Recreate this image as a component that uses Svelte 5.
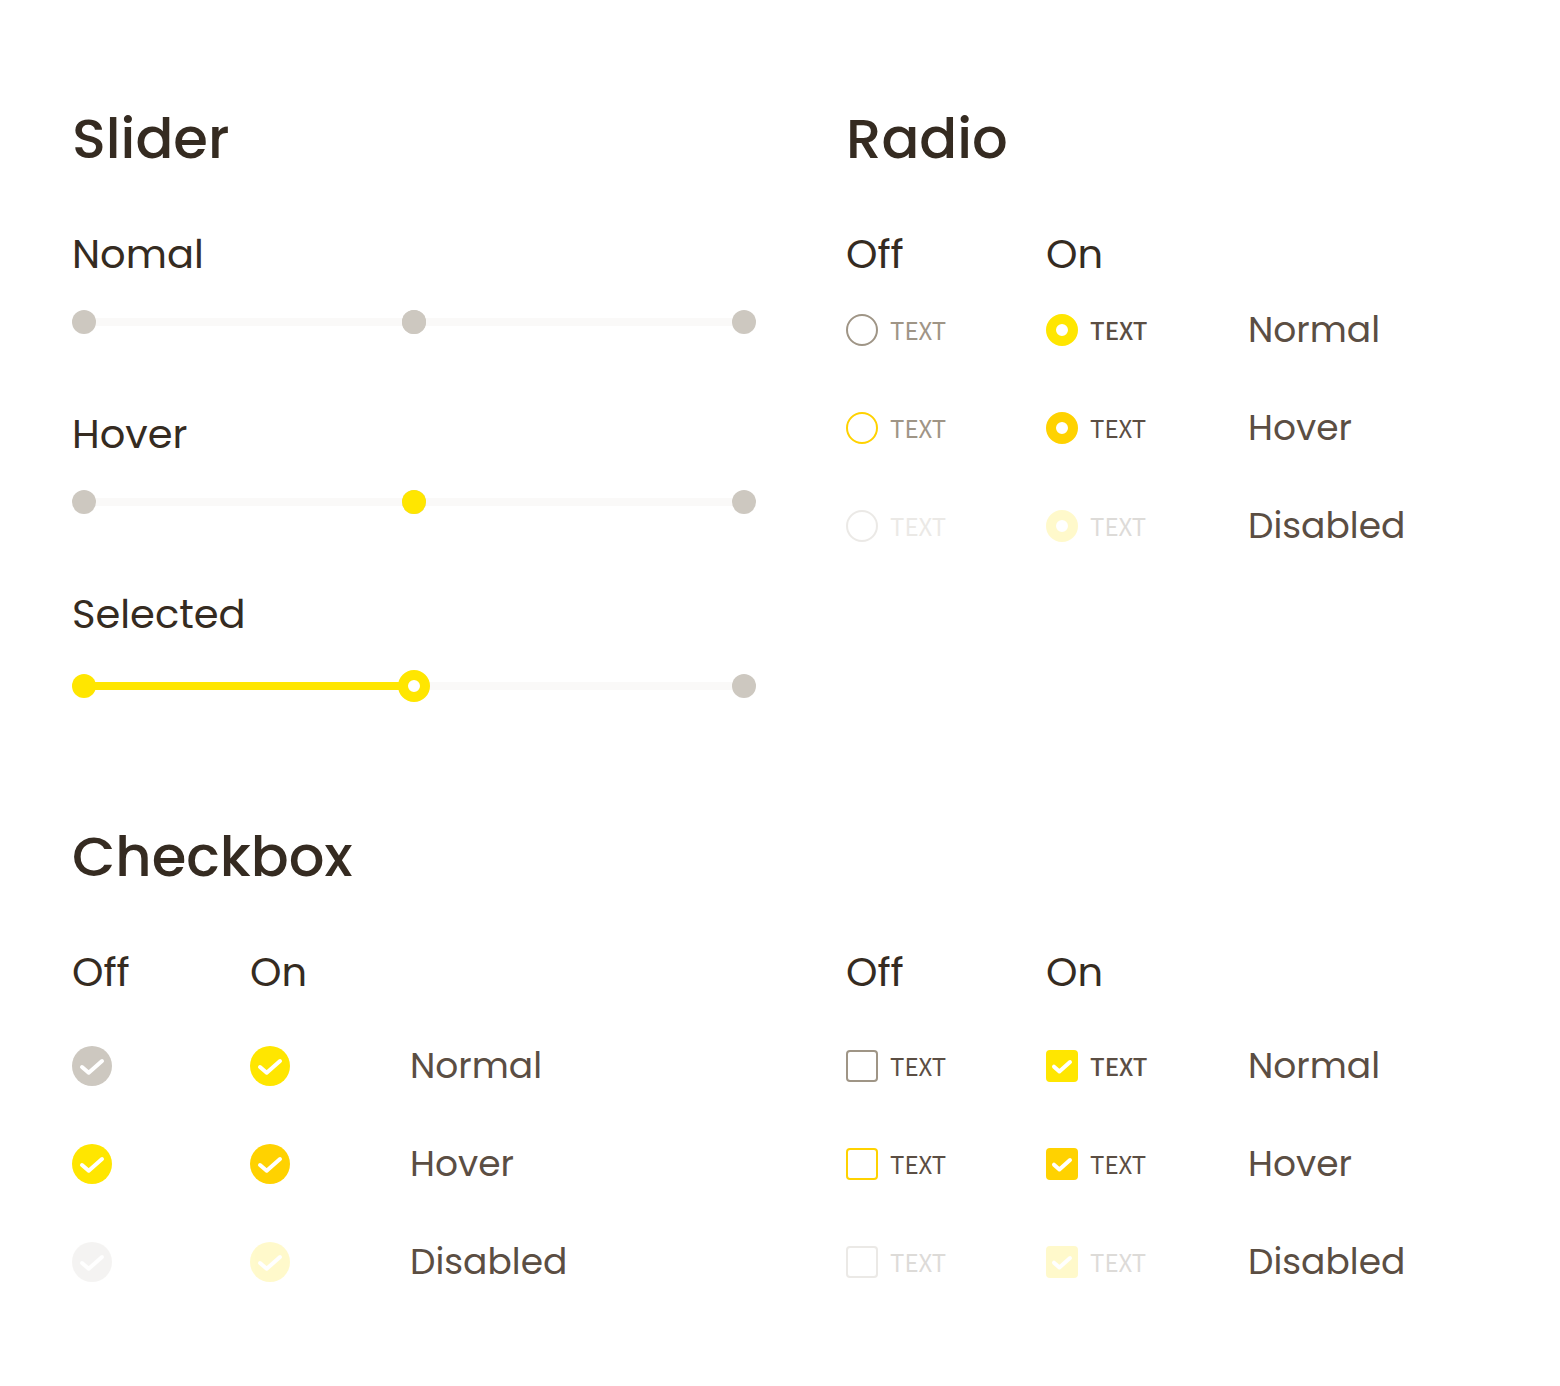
<script>
  const sliders = [
    { title: 'Nomal', kind: 'normal', filled: false },
    { title: 'Hover', kind: 'hover', filled: false },
    { title: 'Selected', kind: 'selected', filled: true }
  ];
  const states = [
    { id: 'normal', title: 'Normal' },
    { id: 'hover', title: 'Hover' },
    { id: 'disabled', title: 'Disabled' }
  ];
  let values = $state([50, 50, 50]);
</script>

<main>
  <section aria-labelledby="slider-title">
    <h2 id="slider-title">Slider</h2>
    <div class="sliders">
      {#each sliders as slider, i}
        <div class="slider-group">
          <label class="heading" for="slider-{slider.kind}">{slider.title}</label>
          <div class="slider {slider.kind}">
            <div class="track">
              {#if slider.filled}
                <div class="fill" style="width: {values[i]}%"></div>
              {/if}
            </div>
            <div class="stops">
              <span class="stop" class:active={slider.filled}></span>
              <span class="stop" class:active={slider.filled && values[i] >= 50}></span>
              <span class="stop" class:active={slider.filled && values[i] >= 100}></span>
            </div>
            <input id="slider-{slider.kind}" type="range" min="0" max="100" step="50" bind:value={values[i]} />
          </div>
        </div>
      {/each}
    </div>
  </section>

  <section aria-labelledby="radio-title">
    <h2 id="radio-title">Radio</h2>
    <div class="heads wide">
      <h3>Off</h3>
      <h3>On</h3>
    </div>
    <div class="rows radios">
      {#each states as state}
        <div class="row wide">
          <label class="option muted {state.id}">
            <input class="radio" type="radio" name="radio-{state.id}" value="off" disabled={state.id === 'disabled'} />
            <span>TEXT</span>
          </label>
          <label class="option {state.id}">
            <input class="radio" type="radio" name="radio-{state.id}" value="on" checked disabled={state.id === 'disabled'} />
            <span class:strong={state.id === 'normal'}>TEXT</span>
          </label>
          <p>{state.title}</p>
        </div>
      {/each}
    </div>
  </section>

  <section aria-labelledby="checkbox-title">
    <h2 id="checkbox-title">Checkbox</h2>
    <div class="heads narrow">
      <h3>Off</h3>
      <h3>On</h3>
    </div>
    <div class="rows">
      {#each states as state}
        <div class="row narrow">
          {#each [false, true] as on}
            <div class="check {state.id}">
              <input class="round" type="checkbox" checked={on} disabled={state.id === 'disabled'} aria-label="{state.title} {on ? 'on' : 'off'}" />
              <svg width="40" height="40" viewBox="0 0 40 40" aria-hidden="true"><path d="M10 21l6.7 5.7L30 15" /></svg>
            </div>
          {/each}
          <p>{state.title}</p>
        </div>
      {/each}
    </div>
  </section>

  <section class="untitled" aria-label="Checkbox with text">
    <div class="heads wide">
      <h3>Off</h3>
      <h3>On</h3>
    </div>
    <div class="rows">
      {#each states as state}
        <div class="row wide">
          {#each [false, true] as on}
            <label class="option {state.id}">
              <span class="check">
                <input class="square" type="checkbox" checked={on} disabled={state.id === 'disabled'} />
                <svg width="32" height="32" viewBox="0 0 32 32" aria-hidden="true"><path d="M8 16.7l5.4 4.8L24 12" /></svg>
              </span>
              <span class:strong={on && state.id === 'normal'}>TEXT</span>
            </label>
          {/each}
          <p>{state.title}</p>
        </div>
      {/each}
    </div>
  </section>
</main>

<style>
  :global(body) {
    margin: 0;
    background: #fff;
  }

  main {
    --ink: #352b21;
    --label: #5b4e43;
    --muted: #9f9586;
    --grey: #cdc8c0;
    --yellow: #ffe600;
    --amber: #ffd200;
    display: grid;
    grid-template-columns: 684fr 642fr;
    column-gap: 90px;
    row-gap: 113px;
    padding: 97px 72px;
    color: var(--ink);
    font-family: Poppins, Inter, sans-serif;
  }

  h2,
  h3,
  p {
    margin: 0;
  }

  h2 {
    margin-bottom: 43px;
    font-size: 56px;
    font-weight: 500;
    line-height: 84px;
  }

  h3,
  .heading {
    font-size: 40px;
    font-weight: 400;
    line-height: 60px;
  }

  p {
    color: var(--label);
    font-size: 36px;
    line-height: 54px;
  }

  .sliders {
    display: flex;
    flex-direction: column;
    gap: 70px;
  }

  .slider-group {
    display: flex;
    flex-direction: column;
    gap: 26px;
  }

  .slider {
    display: grid;
    align-items: center;
    height: 24px;
  }

  .slider.selected {
    height: 32px;
  }

  .slider > * {
    grid-area: 1 / 1;
  }

  .track {
    height: 8px;
    margin: 0 12px;
    background: #faf9f8;
  }

  .fill {
    height: 100%;
    background: var(--yellow);
  }

  .stops {
    display: flex;
    justify-content: space-between;
  }

  .stop {
    width: 24px;
    height: 24px;
    border-radius: 50%;
    background: var(--grey);
  }

  .stop.active {
    background: var(--yellow);
  }

  input {
    appearance: none;
    box-sizing: border-box;
    margin: 0;
    background: transparent;
    cursor: pointer;
  }

  input[type='range'] {
    width: 100%;
    height: 100%;
  }

  input[type='range']::-webkit-slider-thumb {
    appearance: none;
    box-sizing: border-box;
    width: 24px;
    height: 24px;
    border-radius: 50%;
    background: var(--grey);
  }

  .hover input[type='range']::-webkit-slider-thumb {
    background: var(--yellow);
  }

  .selected input[type='range']::-webkit-slider-thumb {
    width: 32px;
    height: 32px;
    border: 10px solid var(--yellow);
    background: #fff;
  }

  .heads,
  .row {
    display: grid;
    align-items: center;
  }

  .wide {
    grid-template-columns: 200px 202px 1fr;
  }

  .narrow {
    grid-template-columns: 178px 160px 1fr;
  }

  .rows {
    display: flex;
    flex-direction: column;
    gap: 44px;
    margin-top: 37px;
  }

  .rows.radios {
    margin-top: 19px;
  }

  .untitled {
    padding-top: 127px;
  }

  .option {
    display: flex;
    align-items: center;
    gap: 12px;
    justify-self: start;
    color: var(--label);
    font-family: 'Noto Sans CJK KR', sans-serif;
    font-size: 24px;
    line-height: 32px;
  }

  .muted {
    color: var(--muted);
  }

  .strong {
    font-weight: 500;
  }

  .disabled {
    opacity: 0.2;
  }

  .radio,
  .square {
    width: 32px;
    height: 32px;
    border: 2px solid var(--muted);
  }

  .radio {
    border-radius: 50%;
  }

  .square {
    border-radius: 4px;
  }

  .hover .radio,
  .hover .square {
    border-color: var(--amber);
  }

  .radio:checked {
    border: 10px solid var(--yellow);
    background: #fff;
  }

  .square:checked {
    border-color: var(--yellow);
    background: var(--yellow);
  }

  .hover .radio:checked {
    border-color: var(--amber);
  }

  .hover .square:checked {
    border-color: var(--amber);
    background: var(--amber);
  }

  .check {
    display: grid;
    justify-self: start;
  }

  .check > * {
    grid-area: 1 / 1;
  }

  .check svg {
    pointer-events: none;
  }

  .check path {
    fill: none;
    stroke: #fff;
    stroke-width: 4;
    stroke-linecap: round;
    stroke-linejoin: round;
  }

  .square:not(:checked) + svg {
    visibility: hidden;
  }

  .round {
    width: 40px;
    height: 40px;
    border-radius: 50%;
    background: var(--grey);
  }

  .round:checked,
  .hover .round {
    background: var(--yellow);
  }

  .hover .round:checked {
    background: var(--amber);
  }
</style>
